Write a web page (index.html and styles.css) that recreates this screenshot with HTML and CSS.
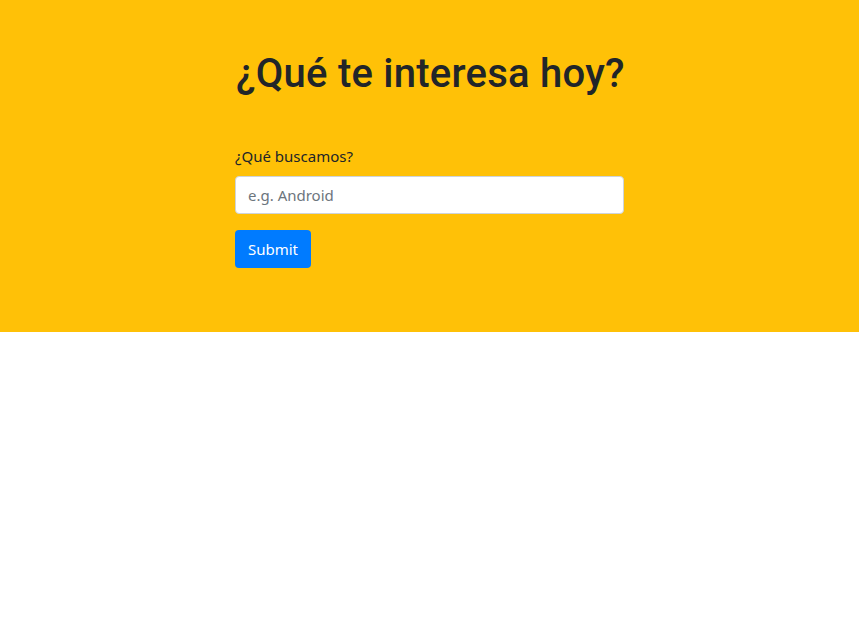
FILE: index.html
```html
<!DOCTYPE html>
<html lang="es">
<head>
<meta charset="utf-8">
<title>¿Qué te interesa hoy?</title>
<link rel="stylesheet" href="styles.css">
</head>
<body>
<section class="hero">
  <div class="content">
    <h1 class="title">¿Qué te interesa hoy?</h1>
    <form class="form">
      <div class="group">
        <label class="label" for="q">¿Qué buscamos?</label>
        <input class="input" id="q" type="text" placeholder="e.g. Android">
      </div>
      <button class="btn" type="button">Submit</button>
    </form>
  </div>
</section>
</body>
</html>
```
FILE: styles.css
```css
* { box-sizing: border-box; }
body {
  margin: 0;
  background: #fff;
  font-family: "Noto Sans", "Open Sans", sans-serif;
  color: #212529;
}
.hero {
  background: #ffc107;
  height: 332px;
  padding-top: 48px;
}
.content {
  width: 389px;
  margin: 0 auto;
}
.title {
  margin: 0 0 46px;
  padding: 2px 0 0 1px;
  font-family: Roboto, "Noto Sans", sans-serif;
  font-size: 40px;
  font-weight: 500;
  line-height: 48px;
  letter-spacing: 0.25px;
  color: #212529;
  white-space: nowrap;
}
.group {
  display: flex;
  flex-direction: column;
  margin-bottom: 16px;
}
.label {
  font-size: 15px;
  line-height: 24px;
  margin-bottom: 8px;
}
.input {
  height: 38px;
  padding: 6px 12px;
  border: 1px solid #ced4da;
  border-radius: 4px;
  font-family: inherit;
  font-size: 15px;
  color: #495057;
  background: #fff;
}
.input::placeholder { color: #6c757d; }
.btn {
  height: 38px;
  width: 76px;
  padding: 0;
  border: none;
  border-radius: 4px;
  background: #007bff;
  color: #fff;
  font-family: inherit;
  font-size: 15px;
}
```
